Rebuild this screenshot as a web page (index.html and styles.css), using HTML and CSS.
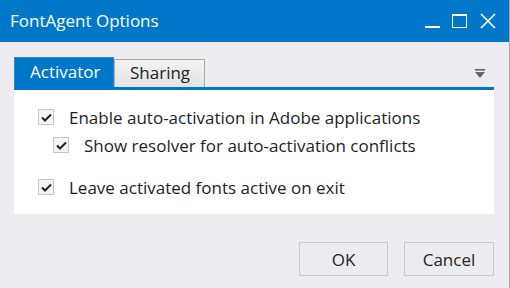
FILE: index.html
```html
<!DOCTYPE html>
<html lang="en">
<head>
  <meta charset="UTF-8" />
  <title>FontAgent Options</title>
  <link rel="stylesheet" href="styles.css">
</head>
<body>
  <div class="window">
    <div class="titlebar">
      <span class="title">FontAgent Options</span>
      <div class="win-buttons">
        <span class="btn-min"></span>
        <span class="btn-max"></span>
        <svg class="btn-close" width="16" height="16" viewBox="0 0 16 16">
          <path d="M1 1 L15 15 M15 1 L1 15" stroke="#fff" stroke-width="1.6" fill="none" />
        </svg>
      </div>
    </div>

    <div class="content">
      <div class="tab-strip">
        <div class="tab active">Activator</div>
        <div class="tab">Sharing</div>
        <svg class="tab-menu" width="10" height="10" viewBox="0 0 10 10">
          <rect x="0" y="0" width="10" height="1.6" fill="#666" />
          <path d="M0 3 L10 3 L5 9 Z" fill="#666" />
        </svg>
      </div>

      <div class="panel">
        <label class="check">
          <span class="box"><svg width="11" height="9" viewBox="0 0 11 9"><path d="M1 4.5 L4 7.5 L10 1.5" stroke="#222" stroke-width="2" fill="none" /></svg></span>
          Enable auto-activation in Adobe applications
        </label>
        <label class="check sub">
          <span class="box"><svg width="11" height="9" viewBox="0 0 11 9"><path d="M1 4.5 L4 7.5 L10 1.5" stroke="#222" stroke-width="2" fill="none" /></svg></span>
          Show resolver for auto-activation conflicts
        </label>
        <label class="check last">
          <span class="box"><svg width="11" height="9" viewBox="0 0 11 9"><path d="M1 4.5 L4 7.5 L10 1.5" stroke="#222" stroke-width="2" fill="none" /></svg></span>
          Leave activated fonts active on exit
        </label>
      </div>

      <div class="actions">
        <button class="ok">OK</button>
        <button>Cancel</button>
      </div>
    </div>
  </div>
</body>
</html>
```

FILE: styles.css
```css
body {
  margin: 0;
  padding: 0;
  font-family: 'Open Sans', 'Noto Sans', sans-serif;
  background-color: #edecf1;
}
.window {
  width: 510px;
  height: 288px;
  box-sizing: border-box;
  border-right: 1px solid #a8a8b0;
  background-color: #edecf1;
}
.titlebar {
  height: 42px;
  background-color: #0077c8;
  color: white;
  display: flex;
  align-items: center;
  justify-content: space-between;
  padding: 0 13px 0 10px;
}
.title {
  font-size: 17px;
  margin-top: -1px;
}
.win-buttons {
  display: flex;
  align-items: center;
  gap: 12px;
}
.btn-min {
  width: 15px;
  height: 2px;
  background: white;
  margin-top: 12px;
}
.btn-max {
  width: 13px;
  height: 11px;
  border: 1px solid white;
  border-top-width: 2px;
}
.btn-close {
  display: block;
  margin-left: 1px;
}
.content {
  padding: 15px 15px 0 14px;
}
.tab-strip {
  display: flex;
  align-items: flex-end;
  height: 30px;
  border-bottom: 3px solid #0077c8;
  position: relative;
}
.tab {
  height: 28px;
  width: 91px;
  box-sizing: border-box;
  font-size: 17px;
  line-height: 26px;
  padding: 0 15px;
  border: 1px solid #a9a9a9;
  border-bottom: none;
  background: linear-gradient(#f3f3f3, #e3e3e3);
  color: #222;
}
.tab.active {
  height: 30px;
  width: 100px;
  line-height: 28px;
  background: #0077c8;
  border-color: #2b88cf;
  color: white;
}
.tab-menu {
  position: absolute;
  right: 9px;
  top: 12px;
}
.panel {
  background: white;
  height: 124px;
  box-sizing: border-box;
  padding-top: 17px;
  display: flex;
  flex-direction: column;
}
.check {
  display: flex;
  align-items: center;
  font-size: 17px;
  color: #1e1e1e;
  padding-left: 24px;
  height: 20px;
  margin-bottom: 8px;
}
.check.sub {
  padding-left: 39px;
}
.check.last {
  margin-top: 14px;
}
.box {
  width: 14px;
  height: 14px;
  border: 1px solid #c4c4cc;
  background: #f4f4f8;
  margin-right: 15px;
  display: flex;
  align-items: center;
  justify-content: center;
  flex-shrink: 0;
}
.actions {
  display: flex;
  justify-content: flex-end;
  gap: 16px;
  margin-top: 28px;
}
button {
  font-family: inherit;
  font-size: 17px;
  color: #222;
  width: 90px;
  height: 34px;
  background: #ecebf0;
  border: 1px solid #c9c9d6;
  padding: 0;
}
button.ok {
  width: 89px;
}
```
